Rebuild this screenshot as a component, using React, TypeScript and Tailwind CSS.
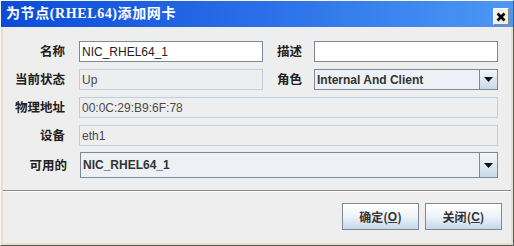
const labelCls = "text-right font-bold text-[12.5px] text-[#222] font-['Noto_Sans_CJK_SC',sans-serif] leading-none";

function Label({ text, w }: { text: string; w: string }) {
  return <div className={`${w} ${labelCls}`}>{text}</div>;
}

function TextField({ value, w }: { value: string; w: string }) {
  return (
    <div className={`${w} h-[21px] bg-white border border-[#7a8a99] flex items-center pl-[2px] text-[12px] text-[#222]`}>
      {value}
    </div>
  );
}

function ReadOnlyField({ value, w }: { value: string; w: string }) {
  return (
    <div className={`${w} h-[21px] bg-[#eeeeee] border border-[#b8cfe5] flex items-center pl-[2px] text-[12px] text-[#4a4a4a]`}>
      {value}
    </div>
  );
}

function Combo({ value, w, h }: { value: string; w: string; h: string }) {
  return (
    <div className={`${w} ${h} border border-[#7a8a99] flex bg-[#edf0f4]`}>
      <div className="flex-1 flex items-center pl-[2px] text-[12px] font-bold text-[#333]">{value}</div>
      <div className="w-[18px] border-l border-[#7a8a99] bg-linear-to-b from-[#f4f7fb] to-[#c9d9ea] flex items-center justify-center">
        <svg width="9" height="5" viewBox="0 0 9 5">
          <path d="M0 0h9L4.5 5z" fill="#111" />
        </svg>
      </div>
    </div>
  );
}

function Button({ label, mnemonic }: { label: string; mnemonic: string }) {
  return (
    <div className="w-[77px] h-[27px] border border-[#7a8a99] bg-linear-to-b from-[#ffffff] via-[#eef3f9] to-[#c6d8ea] flex items-center justify-center text-[12px] font-bold text-[#333] font-['Noto_Sans_CJK_SC',sans-serif]">
      {label}(<span className="underline font-['Liberation_Sans',sans-serif]">{mnemonic}</span>)
    </div>
  );
}

export default function App() {
  return (
    <div className="w-[514px] h-[246px] bg-[#eeeeee] border-t border-l border-[#f6f5ef] border-r border-r-[#5a5a5a] border-b border-b-[#5a5a5a] flex flex-col font-['Liberation_Sans','Noto_Sans_CJK_SC',sans-serif]">
      {/* Title bar */}
      <div className="h-[26px] bg-linear-to-r from-[#0a4cd8] via-[#2a6ee8] to-[#4d97f4] flex items-start justify-between">
        <div className="pl-[5px] pt-[5px] text-white font-bold text-[14px] leading-[16px] tracking-[0.6px] font-['Liberation_Serif','Noto_Sans_CJK_SC',serif]">
          为节点(RHEL64)添加网卡
        </div>
        <div className="mt-[7px] mr-[4px] w-[16px] h-[17px] bg-[#f1efe6] border border-t-white border-l-white border-r-[#8d8a80] border-b-[#8d8a80] flex items-center justify-center">
          <svg width="10" height="10" viewBox="0 0 10 10">
            <path d="M1.5 1.5l7 7M8.5 1.5l-7 7" stroke="#000" strokeWidth="2.6" />
          </svg>
        </div>
      </div>

      {/* Body */}
      <div className="flex-1 flex flex-col border-l-2 border-r-2 border-b-2 border-[#e4e0d0]">
        <div className="pl-[8px] pt-[14px] flex flex-col">
          <div className="flex items-center">
            <Label text="名称" w="w-[54px]" />
            <div className="ml-[14px]"><TextField value="NIC_RHEL64_1" w="w-[184px]" /></div>
            <Label text="描述" w="w-[39px]" />
            <div className="ml-[12px]"><TextField value="" w="w-[184px]" /></div>
          </div>
          <div className="flex items-center mt-[7px]">
            <Label text="当前状态" w="w-[54px]" />
            <div className="ml-[14px]"><ReadOnlyField value="Up" w="w-[184px]" /></div>
            <Label text="角色" w="w-[39px]" />
            <div className="ml-[12px]"><Combo value="Internal And Client" w="w-[184px]" h="h-[21px]" /></div>
          </div>
          <div className="flex items-center mt-[7px]">
            <Label text="物理地址" w="w-[54px]" />
            <div className="ml-[14px]"><ReadOnlyField value="00:0C:29:B9:6F:78" w="w-[419px]" /></div>
          </div>
          <div className="flex items-center mt-[7px]">
            <Label text="设备" w="w-[54px]" />
            <div className="ml-[14px]"><ReadOnlyField value="eth1" w="w-[419px]" /></div>
          </div>
          <div className="flex items-center mt-[6px]">
            <Label text="可用的" w="w-[56px]" />
            <div className="ml-[13px]"><Combo value="NIC_RHEL64_1" w="w-[418px]" h="h-[26px]" /></div>
          </div>
        </div>

        <div className="mt-[12px] h-px bg-[#8a8a8a]" />
        <div className="h-px bg-white" />

        <div className="flex justify-end gap-[6px] pr-[9px] mt-[11px]">
          <Button label="确定" mnemonic="O" />
          <Button label="关闭" mnemonic="C" />
        </div>
      </div>
    </div>
  );
}
